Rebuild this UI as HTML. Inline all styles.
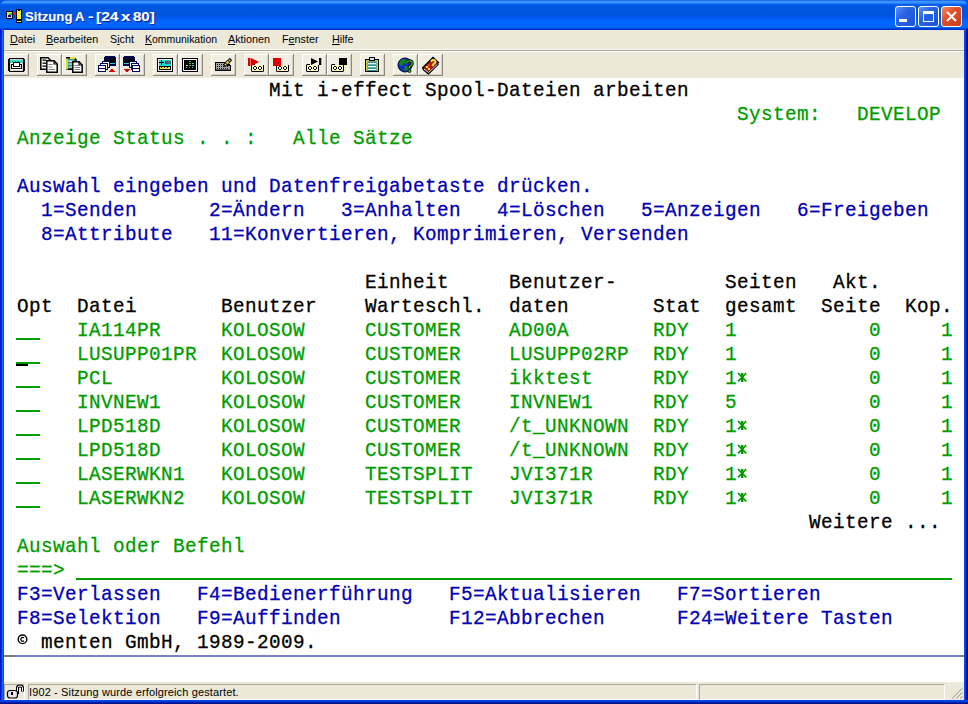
<!DOCTYPE html>
<html><head><meta charset="utf-8">
<style>
html,body{margin:0;padding:0;width:968px;height:704px;overflow:hidden;background:#fff;}
*{box-sizing:border-box;}
#win{position:absolute;left:0;top:0;width:968px;height:704px;background:#0055E5;}
#title{position:absolute;left:0;top:0;width:968px;height:30px;
 background:linear-gradient(to bottom,#0047CC 0px,#3D95FF 1px,#3A93FF 3px,#0A66F5 4px,#0058E0 6px,#0053DD 15px,#0055EE 17px,#0066FF 21px,#0066FF 26px,#005FE8 28px,#0030D0 29px,#0030D0 30px);
 border-radius:7px 7px 0 0;}
#ttext{position:absolute;left:0;top:9px;width:200px;height:18px;font:bold 13px "Liberation Sans",sans-serif;color:#fff;white-space:nowrap;text-shadow:1px 1px 0 #0A1E9F;-webkit-text-stroke:0.15px #fff;}
#ttext span{position:absolute;top:0;transform-origin:0 0;}
.tb{position:absolute;top:6px;width:21px;height:21px;border:1px solid #fff;border-radius:3px;}
#menu{position:absolute;left:4px;top:30px;width:960px;height:21px;background:#ECE9D8;border-bottom:1px solid #A9A593;}
.mi{position:absolute;top:3px;font:11px "Liberation Sans",sans-serif;color:#000;white-space:nowrap;transform:scaleX(0.98);transform-origin:0 0;}
#tool{position:absolute;left:4px;top:51px;width:960px;height:26px;background:#ECE9D8;border-top:1px solid #fff;}
.btn{position:absolute;top:2px;width:25px;height:23px;border-right:1px solid #9D9A8C;border-bottom:1px solid #9D9A8C;border-left:1px solid #FAF9F3;border-top:1px solid #FAF9F3;}
#term{position:absolute;left:4px;top:77px;width:960px;height:605px;background:#fff;}
.r{position:absolute;left:1px;height:24px;width:960px;font:21px/24px "Liberation Mono",monospace;letter-spacing:0.4416px;white-space:pre;-webkit-text-stroke:0.3px currentColor;}
.r span{position:absolute;top:2px;transform:scaleX(0.92);transform-origin:0 0;}
.k{color:#000;} .g{color:#009C00;} .b{color:#0000B4;}
.u{position:absolute;height:2px;background:#00A000;}
#oia{position:absolute;left:12px;top:578px;width:944px;height:2px;background:#7C80C8;}
#status{position:absolute;left:4px;top:682px;width:960px;height:18px;background:#ECE9D8;}
.pn{position:absolute;top:2px;height:16px;border-top:1px solid #ACA899;border-left:1px solid #ACA899;border-bottom:1px solid #fff;border-right:1px solid #fff;}
.st{position:absolute;top:4px;font:11px "Liberation Sans",sans-serif;color:#000;white-space:nowrap;letter-spacing:0.13px;}
</style></head><body>
<div id="win">
 <div id="title">
  <svg width="30" height="30" style="position:absolute;left:0;top:0" shape-rendering="crispEdges">
   <rect x="6" y="11" width="7" height="8" fill="#000"/><rect x="7" y="12" width="5" height="5" fill="#F0F040"/><rect x="9" y="13" width="3" height="2" fill="#10E020"/><rect x="8" y="15" width="3" height="2" fill="#101080"/><rect x="7" y="17" width="5" height="1" fill="#E0D8F0"/>
   <rect x="13" y="12" width="3" height="3" fill="#D02040"/>
   <rect x="16" y="9" width="6" height="14" fill="#000"/><rect x="17" y="10" width="4" height="9" fill="#F8F030"/><rect x="18" y="10" width="2" height="1" fill="#000"/><rect x="17" y="21" width="4" height="1" fill="#F0E060"/>
  </svg>
  <div id="ttext"><span style="left:25px;transform:scaleX(1.01)">Sitzung</span><span style="left:75px">A</span><span style="left:88px;transform:scaleX(1.3)">-</span><span style="left:96px;transform:scaleX(1.2)">[24</span><span style="left:121px;transform:scaleX(1.3)">x</span><span style="left:133px;transform:scaleX(1.15)">80]</span></div>
  <div class="tb" style="left:895px;background:linear-gradient(135deg,#5A8EFF,#2663E0 40%,#1E52D8);"><div style="position:absolute;left:3px;top:12px;width:8px;height:3px;background:#fff;"></div></div>
  <div class="tb" style="left:918px;background:linear-gradient(135deg,#5A8EFF,#2663E0 40%,#1E52D8);"><div style="position:absolute;left:4px;top:4px;width:11px;height:11px;border:1px solid #fff;border-top:3px solid #fff;"></div></div>
  <div class="tb" style="left:941px;background:linear-gradient(135deg,#F0906A,#E0502A 40%,#C8401E);">
   <svg width="19" height="19" style="position:absolute;left:0;top:0"><path d="M5 5 L14 14 M14 5 L5 14" stroke="#fff" stroke-width="2"/></svg></div>
 </div>
 <div style="position:absolute;left:0;top:29px;width:4px;height:671px;background:linear-gradient(to right,#0019CF 0,#0019CF 1px,#1A28D0 1px,#1A28D0 2px,#1668FA 2px,#1668FA 3px,#0055E0 3px)"></div>
 <div style="position:absolute;left:964px;top:29px;width:4px;height:671px;background:linear-gradient(to right,#0048F0 0,#0048F0 1px,#0040E0 1px,#0040E0 2px,#001A90 2px,#001A90 3px,#001070 3px)"></div>
 <div style="position:absolute;left:0;top:700px;width:968px;height:4px;background:linear-gradient(to bottom,#0040F0 0,#0040F0 1px,#0040E0 1px,#0040E0 2px,#0020A0 2px,#0020A0 3px,#001090 3px)"></div>
 <div id="menu">
  <span class="mi" style="left:6px"><u>D</u>atei</span>
  <span class="mi" style="left:42px"><u>B</u>earbeiten</span>
  <span class="mi" style="left:106px">S<u>i</u>cht</span>
  <span class="mi" style="left:141px;transform:scaleX(0.95)"><u>K</u>ommunikation</span>
  <span class="mi" style="left:224px"><u>A</u>ktionen</span>
  <span class="mi" style="left:278px">F<u>e</u>nster</span>
  <span class="mi" style="left:328px"><u>H</u>ilfe</span>
 </div>
 <div style="position:absolute;left:4px;top:49px;width:960px;height:1px;background:#FBFAF4"></div>
 <div id="tool">
 </div>
<!--TOOLBAR-->
<svg id="tsvg" width="968" height="80" style="position:absolute;left:0;top:0" shape-rendering="crispEdges">
<rect x="4" y="54" width="25" height="22" fill="#F0EEE2"/>
<rect x="4" y="54" width="24" height="1" fill="#FFFFFF"/>
<rect x="4" y="54" width="1" height="21" fill="#FFFFFF"/>
<rect x="27" y="55" width="1" height="20" fill="#D4D0C0"/>
<rect x="5" y="74" width="23" height="1" fill="#D4D0C0"/>
<rect x="28" y="54" width="1" height="22" fill="#8D8A7D"/>
<rect x="4" y="75" width="25" height="1" fill="#8D8A7D"/>
<rect x="37" y="54" width="25" height="22" fill="#F0EEE2"/>
<rect x="37" y="54" width="24" height="1" fill="#FFFFFF"/>
<rect x="37" y="54" width="1" height="21" fill="#FFFFFF"/>
<rect x="60" y="55" width="1" height="20" fill="#D4D0C0"/>
<rect x="38" y="74" width="23" height="1" fill="#D4D0C0"/>
<rect x="61" y="54" width="1" height="22" fill="#8D8A7D"/>
<rect x="37" y="75" width="25" height="1" fill="#8D8A7D"/>
<rect x="62" y="54" width="25" height="22" fill="#F0EEE2"/>
<rect x="62" y="54" width="24" height="1" fill="#FFFFFF"/>
<rect x="62" y="54" width="1" height="21" fill="#FFFFFF"/>
<rect x="85" y="55" width="1" height="20" fill="#D4D0C0"/>
<rect x="63" y="74" width="23" height="1" fill="#D4D0C0"/>
<rect x="86" y="54" width="1" height="22" fill="#8D8A7D"/>
<rect x="62" y="75" width="25" height="1" fill="#8D8A7D"/>
<rect x="95" y="54" width="25" height="22" fill="#F0EEE2"/>
<rect x="95" y="54" width="24" height="1" fill="#FFFFFF"/>
<rect x="95" y="54" width="1" height="21" fill="#FFFFFF"/>
<rect x="118" y="55" width="1" height="20" fill="#D4D0C0"/>
<rect x="96" y="74" width="23" height="1" fill="#D4D0C0"/>
<rect x="119" y="54" width="1" height="22" fill="#8D8A7D"/>
<rect x="95" y="75" width="25" height="1" fill="#8D8A7D"/>
<rect x="120" y="54" width="25" height="22" fill="#F0EEE2"/>
<rect x="120" y="54" width="24" height="1" fill="#FFFFFF"/>
<rect x="120" y="54" width="1" height="21" fill="#FFFFFF"/>
<rect x="143" y="55" width="1" height="20" fill="#D4D0C0"/>
<rect x="121" y="74" width="23" height="1" fill="#D4D0C0"/>
<rect x="144" y="54" width="1" height="22" fill="#8D8A7D"/>
<rect x="120" y="75" width="25" height="1" fill="#8D8A7D"/>
<rect x="153" y="54" width="25" height="22" fill="#F0EEE2"/>
<rect x="153" y="54" width="24" height="1" fill="#FFFFFF"/>
<rect x="153" y="54" width="1" height="21" fill="#FFFFFF"/>
<rect x="176" y="55" width="1" height="20" fill="#D4D0C0"/>
<rect x="154" y="74" width="23" height="1" fill="#D4D0C0"/>
<rect x="177" y="54" width="1" height="22" fill="#8D8A7D"/>
<rect x="153" y="75" width="25" height="1" fill="#8D8A7D"/>
<rect x="178" y="54" width="25" height="22" fill="#F0EEE2"/>
<rect x="178" y="54" width="24" height="1" fill="#FFFFFF"/>
<rect x="178" y="54" width="1" height="21" fill="#FFFFFF"/>
<rect x="201" y="55" width="1" height="20" fill="#D4D0C0"/>
<rect x="179" y="74" width="23" height="1" fill="#D4D0C0"/>
<rect x="202" y="54" width="1" height="22" fill="#8D8A7D"/>
<rect x="178" y="75" width="25" height="1" fill="#8D8A7D"/>
<rect x="211" y="54" width="25" height="22" fill="#F0EEE2"/>
<rect x="211" y="54" width="24" height="1" fill="#FFFFFF"/>
<rect x="211" y="54" width="1" height="21" fill="#FFFFFF"/>
<rect x="234" y="55" width="1" height="20" fill="#D4D0C0"/>
<rect x="212" y="74" width="23" height="1" fill="#D4D0C0"/>
<rect x="235" y="54" width="1" height="22" fill="#8D8A7D"/>
<rect x="211" y="75" width="25" height="1" fill="#8D8A7D"/>
<rect x="244" y="54" width="25" height="22" fill="#F0EEE2"/>
<rect x="244" y="54" width="24" height="1" fill="#FFFFFF"/>
<rect x="244" y="54" width="1" height="21" fill="#FFFFFF"/>
<rect x="267" y="55" width="1" height="20" fill="#D4D0C0"/>
<rect x="245" y="74" width="23" height="1" fill="#D4D0C0"/>
<rect x="268" y="54" width="1" height="22" fill="#8D8A7D"/>
<rect x="244" y="75" width="25" height="1" fill="#8D8A7D"/>
<rect x="269" y="54" width="25" height="22" fill="#F0EEE2"/>
<rect x="269" y="54" width="24" height="1" fill="#FFFFFF"/>
<rect x="269" y="54" width="1" height="21" fill="#FFFFFF"/>
<rect x="292" y="55" width="1" height="20" fill="#D4D0C0"/>
<rect x="270" y="74" width="23" height="1" fill="#D4D0C0"/>
<rect x="293" y="54" width="1" height="22" fill="#8D8A7D"/>
<rect x="269" y="75" width="25" height="1" fill="#8D8A7D"/>
<rect x="302" y="54" width="25" height="22" fill="#F0EEE2"/>
<rect x="302" y="54" width="24" height="1" fill="#FFFFFF"/>
<rect x="302" y="54" width="1" height="21" fill="#FFFFFF"/>
<rect x="325" y="55" width="1" height="20" fill="#D4D0C0"/>
<rect x="303" y="74" width="23" height="1" fill="#D4D0C0"/>
<rect x="326" y="54" width="1" height="22" fill="#8D8A7D"/>
<rect x="302" y="75" width="25" height="1" fill="#8D8A7D"/>
<rect x="327" y="54" width="25" height="22" fill="#F0EEE2"/>
<rect x="327" y="54" width="24" height="1" fill="#FFFFFF"/>
<rect x="327" y="54" width="1" height="21" fill="#FFFFFF"/>
<rect x="350" y="55" width="1" height="20" fill="#D4D0C0"/>
<rect x="328" y="74" width="23" height="1" fill="#D4D0C0"/>
<rect x="351" y="54" width="1" height="22" fill="#8D8A7D"/>
<rect x="327" y="75" width="25" height="1" fill="#8D8A7D"/>
<rect x="360" y="54" width="25" height="22" fill="#F0EEE2"/>
<rect x="360" y="54" width="24" height="1" fill="#FFFFFF"/>
<rect x="360" y="54" width="1" height="21" fill="#FFFFFF"/>
<rect x="383" y="55" width="1" height="20" fill="#D4D0C0"/>
<rect x="361" y="74" width="23" height="1" fill="#D4D0C0"/>
<rect x="384" y="54" width="1" height="22" fill="#8D8A7D"/>
<rect x="360" y="75" width="25" height="1" fill="#8D8A7D"/>
<rect x="393" y="54" width="25" height="22" fill="#F0EEE2"/>
<rect x="393" y="54" width="24" height="1" fill="#FFFFFF"/>
<rect x="393" y="54" width="1" height="21" fill="#FFFFFF"/>
<rect x="416" y="55" width="1" height="20" fill="#D4D0C0"/>
<rect x="394" y="74" width="23" height="1" fill="#D4D0C0"/>
<rect x="417" y="54" width="1" height="22" fill="#8D8A7D"/>
<rect x="393" y="75" width="25" height="1" fill="#8D8A7D"/>
<rect x="418" y="54" width="25" height="22" fill="#F0EEE2"/>
<rect x="418" y="54" width="24" height="1" fill="#FFFFFF"/>
<rect x="418" y="54" width="1" height="21" fill="#FFFFFF"/>
<rect x="441" y="55" width="1" height="20" fill="#D4D0C0"/>
<rect x="419" y="74" width="23" height="1" fill="#D4D0C0"/>
<rect x="442" y="54" width="1" height="22" fill="#8D8A7D"/>
<rect x="418" y="75" width="25" height="1" fill="#8D8A7D"/>
<rect x="9" y="58" width="15" height="14" fill="#000"/>
<rect x="8" y="59" width="17" height="12" fill="#000"/>
<rect x="10" y="59" width="13" height="12" fill="#D0D0D0"/>
<rect x="11" y="60" width="11" height="10" fill="#fff"/>
<rect x="10" y="60" width="13" height="3" fill="#30D8C8"/>
<rect x="12" y="61" width="1" height="1" fill="#20A898"/>
<rect x="15" y="61" width="1" height="1" fill="#20A898"/>
<rect x="18" y="61" width="1" height="1" fill="#20A898"/>
<rect x="11" y="64" width="11" height="5" fill="#000"/>
<rect x="12" y="65" width="9" height="3" fill="#fff"/>
<rect x="12" y="66" width="9" height="1" fill="#E0E0E0"/>
<rect x="13" y="62" width="7" height="5" fill="#000"/>
<rect x="14" y="63" width="5" height="3" fill="#fff"/>
<rect x="104" y="57" width="12" height="9" fill="#000050"/>
<rect x="105" y="56" width="10" height="1" fill="#000050"/>
<rect x="105" y="58" width="10" height="6" fill="#000018"/>
<rect x="109" y="63" width="6" height="1" fill="#30C8D8"/>
<rect x="102" y="61" width="8" height="7" fill="#000060"/>
<rect x="103" y="62" width="6" height="5" fill="#fff"/>
<rect x="100" y="63" width="8" height="7" fill="#000060"/>
<rect x="101" y="64" width="6" height="5" fill="#fff"/>
<rect x="98" y="65" width="8" height="7" fill="#000060"/>
<rect x="99" y="66" width="6" height="5" fill="#fff"/>
<rect x="99" y="68" width="6" height="1" fill="#000060"/>
<rect x="111" y="69" width="2" height="1" fill="#E00000"/>
<rect x="110" y="70" width="4" height="1" fill="#E00000"/>
<rect x="109" y="71" width="6" height="1" fill="#E00000"/>
<rect x="123" y="57" width="12" height="9" fill="#000050"/>
<rect x="124" y="56" width="10" height="1" fill="#000050"/>
<rect x="124" y="58" width="10" height="6" fill="#000018"/>
<rect x="124" y="63" width="6" height="1" fill="#30C8D8"/>
<rect x="129" y="61" width="8" height="7" fill="#000060"/>
<rect x="130" y="62" width="6" height="5" fill="#fff"/>
<rect x="131" y="63" width="8" height="7" fill="#000060"/>
<rect x="132" y="64" width="6" height="5" fill="#fff"/>
<rect x="132" y="65" width="8" height="7" fill="#000060"/>
<rect x="133" y="66" width="6" height="5" fill="#fff"/>
<rect x="133" y="68" width="6" height="1" fill="#000060"/>
<rect x="124" y="69" width="6" height="1" fill="#E00000"/>
<rect x="125" y="70" width="4" height="1" fill="#E00000"/>
<rect x="126" y="71" width="2" height="1" fill="#E00000"/>
<rect x="157" y="58" width="16" height="14" fill="#000"/>
<rect x="158" y="59" width="14" height="12" fill="#F0F0F0"/>
<rect x="159" y="60" width="12" height="6" fill="#20D8D0"/>
<rect x="161" y="60" width="1" height="5" fill="#000"/>
<rect x="159" y="62" width="5" height="1" fill="#000"/>
<rect x="165" y="61" width="3" height="3" fill="#A02070"/>
<rect x="166" y="62" width="1" height="1" fill="#E040A0"/>
<rect x="168" y="61" width="3" height="3" fill="#108878"/>
<rect x="159" y="66" width="12" height="4" fill="#000"/>
<rect x="160" y="67" width="10" height="2" fill="#F0E040"/>
<rect x="161" y="67" width="1" height="1" fill="#000"/>
<rect x="164" y="67" width="1" height="1" fill="#000"/>
<rect x="167" y="67" width="1" height="1" fill="#000"/>
<rect x="182" y="58" width="16" height="14" fill="#000"/>
<rect x="183" y="59" width="14" height="12" fill="#F8F8F8"/>
<rect x="184" y="60" width="12" height="10" fill="#000"/>
<rect x="189" y="61" width="2" height="1" fill="#40A040"/>
<rect x="189" y="63" width="2" height="1" fill="#40C040"/>
<rect x="192" y="63" width="2" height="1" fill="#40D0D0"/>
<rect x="186" y="65" width="2" height="1" fill="#E0E040"/>
<rect x="189" y="65" width="2" height="1" fill="#40C040"/>
<rect x="192" y="65" width="2" height="1" fill="#40D0D0"/>
<rect x="186" y="67" width="1" height="1" fill="#E0E040"/>
<rect x="189" y="67" width="1" height="1" fill="#40C040"/>
<rect x="192" y="67" width="1" height="1" fill="#40D0D0"/>
<polygon points="215,62 227,62 231,66 231,71 215,71" fill="#000"/>
<rect x="216" y="63" width="11" height="7" fill="#A8A8A8"/>
<rect x="227" y="66" width="3" height="4" fill="#A8A8A8"/>
<rect x="217" y="64" width="1" height="1" fill="#101010"/>
<rect x="219" y="64" width="1" height="1" fill="#101010"/>
<rect x="221" y="64" width="1" height="1" fill="#101010"/>
<rect x="223" y="64" width="1" height="1" fill="#101010"/>
<rect x="225" y="64" width="1" height="1" fill="#101010"/>
<rect x="227" y="64" width="1" height="1" fill="#101010"/>
<rect x="217" y="66" width="1" height="1" fill="#101010"/>
<rect x="219" y="66" width="1" height="1" fill="#101010"/>
<rect x="221" y="66" width="1" height="1" fill="#101010"/>
<rect x="223" y="66" width="1" height="1" fill="#101010"/>
<rect x="225" y="66" width="1" height="1" fill="#101010"/>
<rect x="227" y="66" width="1" height="1" fill="#101010"/>
<rect x="217" y="68" width="1" height="1" fill="#101010"/>
<rect x="219" y="68" width="1" height="1" fill="#101010"/>
<rect x="221" y="68" width="1" height="1" fill="#101010"/>
<rect x="223" y="68" width="1" height="1" fill="#101010"/>
<rect x="225" y="68" width="1" height="1" fill="#101010"/>
<rect x="227" y="68" width="1" height="1" fill="#101010"/>
<rect x="216" y="69" width="14" height="1" fill="#606060"/>
<rect x="252" y="65" width="11" height="6" fill="#F8F8B8"/>
<rect x="251" y="65" width="1" height="6" fill="#000"/>
<rect x="263" y="65" width="1" height="6" fill="#000"/>
<rect x="252" y="71" width="11" height="1" fill="#000"/>
<rect x="252" y="64" width="3" height="1" fill="#000"/>
<rect x="251" y="71" width="1" height="1" fill="#707060"/>
<rect x="263" y="71" width="1" height="1" fill="#707060"/>
<rect x="251" y="64" width="1" height="1" fill="#707060"/>
<rect x="254" y="66" width="2" height="1" fill="#000"/>
<rect x="254" y="69" width="2" height="1" fill="#000"/>
<rect x="253" y="67" width="1" height="2" fill="#000"/>
<rect x="256" y="67" width="1" height="2" fill="#000"/>
<rect x="254" y="67" width="2" height="2" fill="#fff"/>
<rect x="259" y="66" width="2" height="1" fill="#000"/>
<rect x="259" y="69" width="2" height="1" fill="#000"/>
<rect x="258" y="67" width="1" height="2" fill="#000"/>
<rect x="261" y="67" width="1" height="2" fill="#000"/>
<rect x="259" y="67" width="2" height="2" fill="#fff"/>
<rect x="277" y="65" width="11" height="6" fill="#F8F8B8"/>
<rect x="276" y="65" width="1" height="6" fill="#000"/>
<rect x="288" y="65" width="1" height="6" fill="#000"/>
<rect x="277" y="71" width="11" height="1" fill="#000"/>
<rect x="277" y="64" width="3" height="1" fill="#000"/>
<rect x="276" y="71" width="1" height="1" fill="#707060"/>
<rect x="288" y="71" width="1" height="1" fill="#707060"/>
<rect x="276" y="64" width="1" height="1" fill="#707060"/>
<rect x="279" y="66" width="2" height="1" fill="#000"/>
<rect x="279" y="69" width="2" height="1" fill="#000"/>
<rect x="278" y="67" width="1" height="2" fill="#000"/>
<rect x="281" y="67" width="1" height="2" fill="#000"/>
<rect x="279" y="67" width="2" height="2" fill="#fff"/>
<rect x="284" y="66" width="2" height="1" fill="#000"/>
<rect x="284" y="69" width="2" height="1" fill="#000"/>
<rect x="283" y="67" width="1" height="2" fill="#000"/>
<rect x="286" y="67" width="1" height="2" fill="#000"/>
<rect x="284" y="67" width="2" height="2" fill="#fff"/>
<rect x="307" y="65" width="11" height="6" fill="#F8F8B8"/>
<rect x="306" y="65" width="1" height="6" fill="#000"/>
<rect x="318" y="65" width="1" height="6" fill="#000"/>
<rect x="307" y="71" width="11" height="1" fill="#000"/>
<rect x="307" y="64" width="3" height="1" fill="#000"/>
<rect x="306" y="71" width="1" height="1" fill="#707060"/>
<rect x="318" y="71" width="1" height="1" fill="#707060"/>
<rect x="306" y="64" width="1" height="1" fill="#707060"/>
<rect x="309" y="66" width="2" height="1" fill="#000"/>
<rect x="309" y="69" width="2" height="1" fill="#000"/>
<rect x="308" y="67" width="1" height="2" fill="#000"/>
<rect x="311" y="67" width="1" height="2" fill="#000"/>
<rect x="309" y="67" width="2" height="2" fill="#fff"/>
<rect x="314" y="66" width="2" height="1" fill="#000"/>
<rect x="314" y="69" width="2" height="1" fill="#000"/>
<rect x="313" y="67" width="1" height="2" fill="#000"/>
<rect x="316" y="67" width="1" height="2" fill="#000"/>
<rect x="314" y="67" width="2" height="2" fill="#fff"/>
<rect x="332" y="65" width="11" height="6" fill="#F8F8B8"/>
<rect x="331" y="65" width="1" height="6" fill="#000"/>
<rect x="343" y="65" width="1" height="6" fill="#000"/>
<rect x="332" y="71" width="11" height="1" fill="#000"/>
<rect x="332" y="64" width="3" height="1" fill="#000"/>
<rect x="331" y="71" width="1" height="1" fill="#707060"/>
<rect x="343" y="71" width="1" height="1" fill="#707060"/>
<rect x="331" y="64" width="1" height="1" fill="#707060"/>
<rect x="334" y="66" width="2" height="1" fill="#000"/>
<rect x="334" y="69" width="2" height="1" fill="#000"/>
<rect x="333" y="67" width="1" height="2" fill="#000"/>
<rect x="336" y="67" width="1" height="2" fill="#000"/>
<rect x="334" y="67" width="2" height="2" fill="#fff"/>
<rect x="339" y="66" width="2" height="1" fill="#000"/>
<rect x="339" y="69" width="2" height="1" fill="#000"/>
<rect x="338" y="67" width="1" height="2" fill="#000"/>
<rect x="341" y="67" width="1" height="2" fill="#000"/>
<rect x="339" y="67" width="2" height="2" fill="#fff"/>
</svg>
<svg width="968" height="80" style="position:absolute;left:0;top:0">
<path d="M224 66 L231 59" stroke="#000" stroke-width="3.2"/><path d="M224.8 65.2 L230.2 59.8" stroke="#F0E020" stroke-width="1.3"/><circle cx="227.5" cy="62.5" r="1.8" fill="#F0E020" stroke="#000" stroke-width="0.8"/>
<rect x="248" y="58" width="2.5" height="8" fill="#E00000"/><polygon points="251,58 259,62 251,66" fill="#E00000"/>
<rect x="273" y="58" width="8" height="8" fill="#E00000"/>
<polygon points="311,58 318,61.5 311,65" fill="#000"/><rect x="319" y="58" width="2.3" height="7" fill="#000"/>
<rect x="339" y="58" width="8" height="7" fill="#000"/>
<rect x="365.5" y="59.5" width="13" height="12" fill="#2E8E9E" stroke="#000" stroke-width="1"/><rect x="366" y="60" width="12" height="1.5" fill="#C8D040"/><rect x="366" y="60" width="1.5" height="11" fill="#C8D040"/><rect x="376.5" y="60" width="1.5" height="11" fill="#C8D040"/>
<rect x="368" y="63" width="8" height="1.3" fill="#E8FFFF"/><rect x="368" y="66" width="8" height="1.3" fill="#E8FFFF"/><rect x="368" y="69" width="8" height="1" fill="#E8FFFF"/>
<rect x="369.5" y="57.5" width="5" height="3" fill="#ddd" stroke="#000" stroke-width="1"/>
<circle cx="405" cy="65" r="7" fill="#1030C0" stroke="#000040" stroke-width="1"/>
<path d="M401 60 Q405 58 408 61 L407 64 L404 63 L402 66 L399 64 Z" fill="#108818"/><path d="M405 66 L409 67 L407 71 L404 70 Z" fill="#108818"/>
<path d="M406.5 62.5 Q409 59.5 412 62 Q413 65 409.5 66.5 L409 68.5" stroke="#000" stroke-width="3" fill="none"/><path d="M406.5 62.5 Q409 59.5 412 62 Q413 65 409.5 66.5 L409 68.5" stroke="#30C030" stroke-width="1.4" fill="none"/><circle cx="409.5" cy="71" r="1.5" fill="#30C030" stroke="#000" stroke-width="0.8"/>
<polygon points="422.5,68 433,57.5 438.5,62.5 428,73" fill="#B81818" stroke="#000" stroke-width="1.3"/>
<path d="M423 69.5 L428.5 74 L438.5 64" fill="none" stroke="#000" stroke-width="1.2"/><path d="M424 69 L428.5 72.5 L437.5 64" fill="none" stroke="#fff" stroke-width="0.9"/>
<path d="M431 61.5 Q432.5 59 435 60.5 Q436.5 62.5 433.5 64 L432.5 66" stroke="#F8E830" stroke-width="2" fill="none"/>
<rect x="426" y="66" width="2" height="2" fill="#F8E830"/><rect x="428" y="68" width="2" height="2" fill="#F8E830"/><rect x="428" y="64" width="2" height="2" fill="#E04020"/>
<path d="M40.8 57.8 H48 L50 59.8 V69.2 H40.8 Z" fill="#fff" stroke="#000" stroke-width="1.5"/>
<rect x="42.5" y="59.5" width="3.5" height="1.3" fill="#000"/><rect x="42.5" y="62.5" width="3.5" height="1.3" fill="#000"/><rect x="42.5" y="65.5" width="3.5" height="1.3" fill="#000"/>
<path d="M46.8 60.8 H54 L57.2 64 V72.2 H46.8 Z" fill="#fff" stroke="#000" stroke-width="1.5"/><path d="M54 60.8 V64 H57.2" fill="none" stroke="#000" stroke-width="1.2"/>
<rect x="48.5" y="64" width="4" height="1" fill="#808080"/><rect x="48.5" y="66.5" width="4" height="1" fill="#808080"/><rect x="48.5" y="69" width="6.5" height="1" fill="#808080"/>
<path d="M66.8 57.8 H74 L76 59.8 V69.2 H66.8 Z" fill="#3A8C8C" stroke="#000" stroke-width="1.5"/><rect x="66" y="58.5" width="2" height="11" fill="#C8E030"/><rect x="70" y="57" width="5" height="2" fill="#E8E040"/>
<rect x="68.5" y="60.5" width="4.5" height="1.2" fill="#fff"/><rect x="68.5" y="63.5" width="4.5" height="1.2" fill="#A0F0F0"/><rect x="68.5" y="66.5" width="4.5" height="1.2" fill="#A0F0F0"/>
<path d="M72.8 61.8 H79 L82.2 65 V72.2 H72.8 Z" fill="#fff" stroke="#000" stroke-width="1.5"/><path d="M79 61.8 V65 H82.2" fill="none" stroke="#000" stroke-width="1.2"/>
<rect x="74.5" y="65" width="4" height="1" fill="#808080"/><rect x="74.5" y="67" width="5.5" height="1" fill="#808080"/><rect x="74.5" y="69" width="5.5" height="1" fill="#808080"/>
</svg>
<!--/TOOLBAR-->
 <div style="position:absolute;left:4px;top:77px;width:960px;height:1px;background:#EEEBDF;z-index:2"></div>
 <div id="term">
<!--TERM-->
<div class="r" style="top:0px"><span class="k" style="left:264px">Mit i-effect Spool-Dateien arbeiten</span></div>
<div class="r" style="top:24px"><span class="g" style="left:732px">System:</span><span class="g" style="left:852px">DEVELOP</span></div>
<div class="r" style="top:48px"><span class="g" style="left:12px">Anzeige Status . . :</span><span class="g" style="left:288px">Alle Sätze</span></div>
<div class="r" style="top:96px"><span class="b" style="left:12px">Auswahl eingeben und Datenfreigabetaste drücken.</span></div>
<div class="r" style="top:120px"><span class="b" style="left:36px">1=Senden</span><span class="b" style="left:204px">2=Ändern</span><span class="b" style="left:336px">3=Anhalten</span><span class="b" style="left:492px">4=Löschen</span><span class="b" style="left:636px">5=Anzeigen</span><span class="b" style="left:792px">6=Freigeben</span></div>
<div class="r" style="top:144px"><span class="b" style="left:36px">8=Attribute</span><span class="b" style="left:204px">11=Konvertieren, Komprimieren, Versenden</span></div>
<div class="r" style="top:192px"><span class="k" style="left:360px">Einheit</span><span class="k" style="left:504px">Benutzer-</span><span class="k" style="left:720px">Seiten</span><span class="k" style="left:828px">Akt.</span></div>
<div class="r" style="top:216px"><span class="k" style="left:12px">Opt</span><span class="k" style="left:72px">Datei</span><span class="k" style="left:216px">Benutzer</span><span class="k" style="left:360px">Warteschl.</span><span class="k" style="left:504px">daten</span><span class="k" style="left:648px">Stat</span><span class="k" style="left:720px">gesamt</span><span class="k" style="left:816px">Seite</span><span class="k" style="left:900px">Kop.</span></div>
<div class="r" style="top:240px"><span class="g" style="left:72px">IA114PR</span><span class="g" style="left:216px">KOLOSOW</span><span class="g" style="left:360px">CUSTOMER</span><span class="g" style="left:504px">AD00A</span><span class="g" style="left:648px">RDY</span><span class="g" style="left:720px">1</span><span class="g" style="left:864px">0</span><span class="g" style="left:936px">1</span></div>
<div class="r" style="top:264px"><span class="g" style="left:72px">LUSUPP01PR</span><span class="g" style="left:216px">KOLOSOW</span><span class="g" style="left:360px">CUSTOMER</span><span class="g" style="left:504px">LUSUPP02RP</span><span class="g" style="left:648px">RDY</span><span class="g" style="left:720px">1</span><span class="g" style="left:864px">0</span><span class="g" style="left:936px">1</span></div>
<div class="r" style="top:288px"><span class="g" style="left:72px">PCL</span><span class="g" style="left:216px">KOLOSOW</span><span class="g" style="left:360px">CUSTOMER</span><span class="g" style="left:504px">ikktest</span><span class="g" style="left:648px">RDY</span><span class="g" style="left:720px">1</span><span class="g" style="left:864px">0</span><span class="g" style="left:936px">1</span></div>
<div class="r" style="top:312px"><span class="g" style="left:72px">INVNEW1</span><span class="g" style="left:216px">KOLOSOW</span><span class="g" style="left:360px">CUSTOMER</span><span class="g" style="left:504px">INVNEW1</span><span class="g" style="left:648px">RDY</span><span class="g" style="left:720px">5</span><span class="g" style="left:864px">0</span><span class="g" style="left:936px">1</span></div>
<div class="r" style="top:336px"><span class="g" style="left:72px">LPD518D</span><span class="g" style="left:216px">KOLOSOW</span><span class="g" style="left:360px">CUSTOMER</span><span class="g" style="left:504px">/t_UNKNOWN</span><span class="g" style="left:648px">RDY</span><span class="g" style="left:720px">1</span><span class="g" style="left:864px">0</span><span class="g" style="left:936px">1</span></div>
<div class="r" style="top:360px"><span class="g" style="left:72px">LPD518D</span><span class="g" style="left:216px">KOLOSOW</span><span class="g" style="left:360px">CUSTOMER</span><span class="g" style="left:504px">/t_UNKNOWN</span><span class="g" style="left:648px">RDY</span><span class="g" style="left:720px">1</span><span class="g" style="left:864px">0</span><span class="g" style="left:936px">1</span></div>
<div class="r" style="top:384px"><span class="g" style="left:72px">LASERWKN1</span><span class="g" style="left:216px">KOLOSOW</span><span class="g" style="left:360px">TESTSPLIT</span><span class="g" style="left:504px">JVI371R</span><span class="g" style="left:648px">RDY</span><span class="g" style="left:720px">1</span><span class="g" style="left:864px">0</span><span class="g" style="left:936px">1</span></div>
<div class="r" style="top:408px"><span class="g" style="left:72px">LASERWKN2</span><span class="g" style="left:216px">KOLOSOW</span><span class="g" style="left:360px">TESTSPLIT</span><span class="g" style="left:504px">JVI371R</span><span class="g" style="left:648px">RDY</span><span class="g" style="left:720px">1</span><span class="g" style="left:864px">0</span><span class="g" style="left:936px">1</span></div>
<div class="r" style="top:432px"><span class="k" style="left:804px">Weitere ...</span></div>
<div class="r" style="top:456px"><span class="g" style="left:12px">Auswahl oder Befehl</span></div>
<div class="r" style="top:480px"><span class="g" style="left:12px">===&gt;</span></div>
<div class="r" style="top:504px"><span class="b" style="left:12px">F3=Verlassen</span><span class="b" style="left:192px">F4=Bedienerführung</span><span class="b" style="left:444px">F5=Aktualisieren</span><span class="b" style="left:672px">F7=Sortieren</span></div>
<div class="r" style="top:528px"><span class="b" style="left:12px">F8=Selektion</span><span class="b" style="left:192px">F9=Auffinden</span><span class="b" style="left:444px">F12=Abbrechen</span><span class="b" style="left:672px">F24=Weitere Tasten</span></div>
<div class="r" style="top:552px"><span class="k" style="left:36px">menten GmbH, 1989-2009.</span></div>
<div class="u" style="left:12px;top:261px;width:24px"></div>
<div class="u" style="left:12px;top:285px;width:24px"></div>
<div class="u" style="left:12px;top:309px;width:24px"></div>
<div class="u" style="left:12px;top:333px;width:24px"></div>
<div class="u" style="left:12px;top:357px;width:24px"></div>
<div class="u" style="left:12px;top:381px;width:24px"></div>
<div class="u" style="left:12px;top:405px;width:24px"></div>
<div class="u" style="left:12px;top:429px;width:24px"></div>
<div class="u" style="left:72px;top:501px;width:876px"></div>
<div id="cur" style="position:absolute;left:12px;top:287px;width:12px;height:2px;background:#000"></div>
<svg width="20" height="20" style="position:absolute;left:8px;top:552px"><circle cx="10.5" cy="10.3" r="4.3" fill="none" stroke="#000" stroke-width="1.4"/><path d="M12 8.9 A1.9 1.9 0 1 0 12 11.7" fill="none" stroke="#000" stroke-width="1.2"/></svg>
<svg width="960" height="576" style="position:absolute;left:0;top:0"><path d="M734 296.2 L742.2 304.4 M742.2 296.2 L734 304.4" stroke="#009C00" stroke-width="1.7"/><rect x="737" y="296" width="2.4" height="9" fill="#009C00"/><path d="M734 344.2 L742.2 352.4 M742.2 344.2 L734 352.4" stroke="#009C00" stroke-width="1.7"/><rect x="737" y="344" width="2.4" height="9" fill="#009C00"/><path d="M734 368.2 L742.2 376.4 M742.2 368.2 L734 376.4" stroke="#009C00" stroke-width="1.7"/><rect x="737" y="368" width="2.4" height="9" fill="#009C00"/><path d="M734 392.2 L742.2 400.4 M742.2 392.2 L734 400.4" stroke="#009C00" stroke-width="1.7"/><rect x="737" y="392" width="2.4" height="9" fill="#009C00"/><path d="M734 416.2 L742.2 424.4 M742.2 416.2 L734 424.4" stroke="#009C00" stroke-width="1.7"/><rect x="737" y="416" width="2.4" height="9" fill="#009C00"/></svg>
<div id="oia"></div><div style="position:absolute;left:0;top:578px;width:12px;height:2px;background:#7C7C88"></div><div style="position:absolute;left:956px;top:578px;width:4px;height:2px;background:#7C7C88"></div>
<!--/TERM-->
 </div>
 <div id="status">
  <div class="pn" style="left:0;width:21px;"></div>
  <div class="pn" style="left:24px;width:669px;"></div>
  <div class="pn" style="left:695px;width:246px;"></div>
  <svg width="960" height="18" style="position:absolute;left:0;top:0">
   <path d="M13.5 12 V5.5 Q13.5 4 16 4 Q18.5 4 18.5 5.5 V9.5" fill="none" stroke="#000" stroke-width="3"/>
   <path d="M13.5 12 V5.5 Q13.5 4 16 4 Q18.5 4 18.5 5.5 V9" fill="none" stroke="#fff" stroke-width="1"/>
   <rect x="3.5" y="8.5" width="10" height="7.5" rx="2.5" fill="#E8E4F4" stroke="#000" stroke-width="1.2"/>
   <rect x="7" y="10" width="2" height="3" fill="#000"/>
   <path d="M948.5 16.5 L958.5 6.5 M952.5 16.5 L958.5 10.5 M956.5 16.5 L958.5 14.5" stroke="#A8A596" stroke-width="1.2"/>
   <path d="M949.5 16.5 L958.5 7.5 M953.5 16.5 L958.5 11.5 M957.5 16.5 L958.5 15.5" stroke="#fff" stroke-width="0.8"/>
  </svg>
  <div class="st" style="left:25px;">I902 - Sitzung wurde erfolgreich gestartet.</div>
 </div>
</div>
</body></html>
